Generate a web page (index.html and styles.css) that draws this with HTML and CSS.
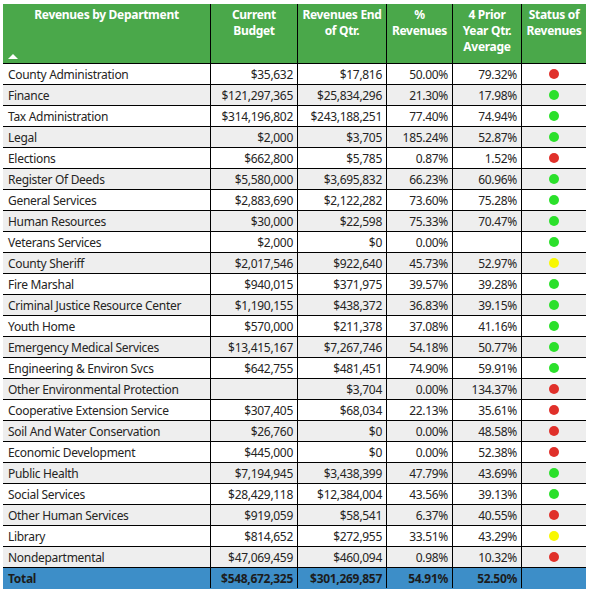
FILE: index.html
```html
<!DOCTYPE html>
<html>
<head>
<meta charset="utf-8">
<link rel="stylesheet" href="styles.css">
</head>
<body>
<div class="grid">
  <div class="row head">
    <div class="c c1 h1"><span>Revenues by Department</span><span class="arrow"></span></div>
    <div class="c">Current Budget</div>
    <div class="c">Revenues End of Qtr.</div>
    <div class="c">% Revenues</div>
    <div class="c">4 Prior Year Qtr. Average</div>
    <div class="c">Status of Revenues</div>
  </div>
  <div class="row"><div class="c c1">County Administration</div><div class="c">$35,632</div><div class="c">$17,816</div><div class="c">50.00%</div><div class="c">79.32%</div><div class="c s"><i class="dot red"></i></div></div>
  <div class="row alt"><div class="c c1">Finance</div><div class="c">$121,297,365</div><div class="c">$25,834,296</div><div class="c">21.30%</div><div class="c">17.98%</div><div class="c s"><i class="dot green"></i></div></div>
  <div class="row"><div class="c c1">Tax Administration</div><div class="c">$314,196,802</div><div class="c">$243,188,251</div><div class="c">77.40%</div><div class="c">74.94%</div><div class="c s"><i class="dot green"></i></div></div>
  <div class="row alt"><div class="c c1">Legal</div><div class="c">$2,000</div><div class="c">$3,705</div><div class="c">185.24%</div><div class="c">52.87%</div><div class="c s"><i class="dot green"></i></div></div>
  <div class="row"><div class="c c1">Elections</div><div class="c">$662,800</div><div class="c">$5,785</div><div class="c">0.87%</div><div class="c">1.52%</div><div class="c s"><i class="dot red"></i></div></div>
  <div class="row alt"><div class="c c1">Register Of Deeds</div><div class="c">$5,580,000</div><div class="c">$3,695,832</div><div class="c">66.23%</div><div class="c">60.96%</div><div class="c s"><i class="dot green"></i></div></div>
  <div class="row"><div class="c c1">General Services</div><div class="c">$2,883,690</div><div class="c">$2,122,282</div><div class="c">73.60%</div><div class="c">75.28%</div><div class="c s"><i class="dot green"></i></div></div>
  <div class="row alt"><div class="c c1">Human Resources</div><div class="c">$30,000</div><div class="c">$22,598</div><div class="c">75.33%</div><div class="c">70.47%</div><div class="c s"><i class="dot green"></i></div></div>
  <div class="row"><div class="c c1">Veterans Services</div><div class="c">$2,000</div><div class="c">$0</div><div class="c">0.00%</div><div class="c"></div><div class="c s"><i class="dot green"></i></div></div>
  <div class="row alt"><div class="c c1">County Sheriff</div><div class="c">$2,017,546</div><div class="c">$922,640</div><div class="c">45.73%</div><div class="c">52.97%</div><div class="c s"><i class="dot yellow"></i></div></div>
  <div class="row"><div class="c c1">Fire Marshal</div><div class="c">$940,015</div><div class="c">$371,975</div><div class="c">39.57%</div><div class="c">39.28%</div><div class="c s"><i class="dot green"></i></div></div>
  <div class="row alt"><div class="c c1">Criminal Justice Resource Center</div><div class="c">$1,190,155</div><div class="c">$438,372</div><div class="c">36.83%</div><div class="c">39.15%</div><div class="c s"><i class="dot green"></i></div></div>
  <div class="row"><div class="c c1">Youth Home</div><div class="c">$570,000</div><div class="c">$211,378</div><div class="c">37.08%</div><div class="c">41.16%</div><div class="c s"><i class="dot green"></i></div></div>
  <div class="row alt"><div class="c c1">Emergency Medical Services</div><div class="c">$13,415,167</div><div class="c">$7,267,746</div><div class="c">54.18%</div><div class="c">50.77%</div><div class="c s"><i class="dot green"></i></div></div>
  <div class="row"><div class="c c1">Engineering &amp; Environ Svcs</div><div class="c">$642,755</div><div class="c">$481,451</div><div class="c">74.90%</div><div class="c">59.91%</div><div class="c s"><i class="dot green"></i></div></div>
  <div class="row alt"><div class="c c1">Other Environmental Protection</div><div class="c"></div><div class="c">$3,704</div><div class="c">0.00%</div><div class="c">134.37%</div><div class="c s"><i class="dot red"></i></div></div>
  <div class="row"><div class="c c1">Cooperative Extension Service</div><div class="c">$307,405</div><div class="c">$68,034</div><div class="c">22.13%</div><div class="c">35.61%</div><div class="c s"><i class="dot red"></i></div></div>
  <div class="row alt"><div class="c c1">Soil And Water Conservation</div><div class="c">$26,760</div><div class="c">$0</div><div class="c">0.00%</div><div class="c">48.58%</div><div class="c s"><i class="dot red"></i></div></div>
  <div class="row"><div class="c c1">Economic Development</div><div class="c">$445,000</div><div class="c">$0</div><div class="c">0.00%</div><div class="c">52.38%</div><div class="c s"><i class="dot red"></i></div></div>
  <div class="row alt"><div class="c c1">Public Health</div><div class="c">$7,194,945</div><div class="c">$3,438,399</div><div class="c">47.79%</div><div class="c">43.69%</div><div class="c s"><i class="dot green"></i></div></div>
  <div class="row"><div class="c c1">Social Services</div><div class="c">$28,429,118</div><div class="c">$12,384,004</div><div class="c">43.56%</div><div class="c">39.13%</div><div class="c s"><i class="dot green"></i></div></div>
  <div class="row alt"><div class="c c1">Other Human Services</div><div class="c">$919,059</div><div class="c">$58,541</div><div class="c">6.37%</div><div class="c">40.55%</div><div class="c s"><i class="dot red"></i></div></div>
  <div class="row"><div class="c c1">Library</div><div class="c">$814,652</div><div class="c">$272,955</div><div class="c">33.51%</div><div class="c">43.29%</div><div class="c s"><i class="dot yellow"></i></div></div>
  <div class="row alt"><div class="c c1">Nondepartmental</div><div class="c">$47,069,459</div><div class="c">$460,094</div><div class="c">0.98%</div><div class="c">10.32%</div><div class="c s"><i class="dot red"></i></div></div>
  <div class="row total"><div class="c c1">Total</div><div class="c">$548,672,325</div><div class="c">$301,269,857</div><div class="c">54.91%</div><div class="c">52.50%</div><div class="c s"></div></div>
</div>
</body>
</html>
```
FILE: styles.css
```css
html, body {
  margin: 0;
  padding: 0;
  background: #ffffff;
}
body {
  padding: 4px 0 0 3px;
  font-family: "Noto Sans", "Open Sans", sans-serif;
  font-size: 12px;
  letter-spacing: -0.3px;
  color: #252423;
}
.grid {
  width: 583px;
}
.row {
  display: grid;
  grid-template-columns: 208px 87px 89px 66px 69px 64px;
  grid-template-rows: 20px;
  height: 21px;
  border-bottom: 1px solid #000;
  box-sizing: border-box;
}
.row.alt { background: #eeeeee; }
.c {
  border-right: 1px solid #000;
  text-align: right;
  padding: 1px 4px 0 4px;
  line-height: 20px;
  white-space: nowrap;
  overflow: hidden;
}
.c:last-child { border-right: none; }
.c1 { text-align: left; padding-left: 5px; }
.s {
  display: flex;
  align-items: center;
  justify-content: center;
  padding: 0;
}
.dot {
  display: block;
  width: 10px;
  height: 10px;
  border-radius: 50%;
}
.red { background: #e0302a; }
.green { background: #2be02b; }
.yellow { background: #f8f800; }

.head {
  height: 60px;
  grid-template-rows: 59px;
  background: #4aa84a;
  color: #ffffff;
  font-weight: bold;
}
.head .c {
  text-align: center;
  white-space: normal;
  line-height: 16px;
  padding: 3px 2px 0 2px;
}
.head .h1 {
  display: flex;
  flex-direction: column;
  justify-content: space-between;
  align-items: center;
  padding-bottom: 4px;
}
.arrow {
  align-self: flex-start;
  width: 0;
  height: 0;
  border-left: 5px solid transparent;
  border-right: 5px solid transparent;
  border-bottom: 5px solid #ffffff;
  margin-left: 3px;
}
.total {
  background: #3d8ec8;
  font-weight: bold;
  color: #1c1c1c;
  border-bottom: none;
}
```
